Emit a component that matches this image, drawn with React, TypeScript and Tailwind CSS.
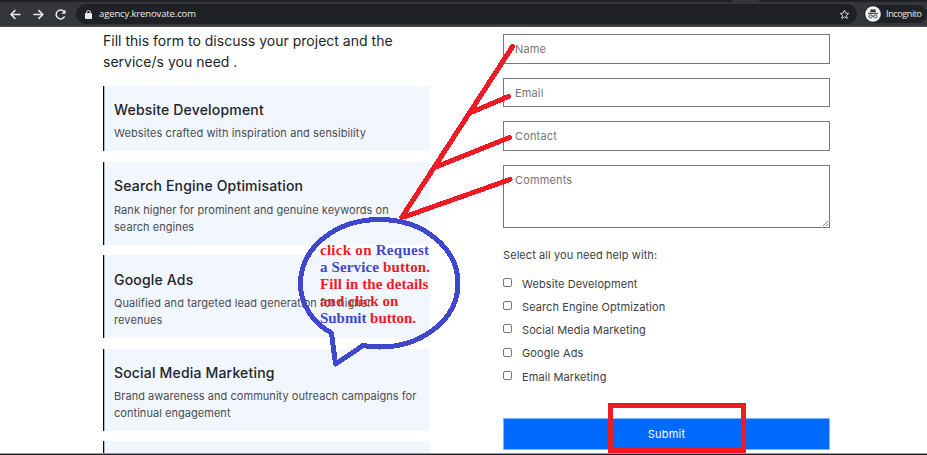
import React from 'react';

const services = [
  { title: 'Website Development', lines: ['Websites crafted with inspiration and sensibility'], box: 'h-[65px] pt-[14px]', text: 'tracking-[0.1px] pt-[6px]' },
  { title: 'Search Engine Optimisation', lines: ['Rank higher for prominent and genuine keywords on', 'search engines'], box: 'h-[83px] pt-[14.5px]', text: 'tracking-[0.06px] pt-[7px]' },
  { title: 'Google Ads', lines: ['Qualified and targeted lead generation for higher', 'revenues'], box: 'h-[83px] pt-[15px]', text: 'tracking-[0.09px] pt-[6px]' },
  { title: 'Social Media Marketing', lines: ['Brand awareness and community outreach campaigns for', 'continual engagement'], box: 'h-[82px] pt-[14px]', text: 'tracking-[0.04px] pt-[6.500px]' },
];

const options = ['Website Development', 'Search Engine Optmization', 'Social Media Marketing', 'Google Ads', 'Email Marketing'];

function Toolbar() {
  return (
    <header className="relative flex h-[27px] shrink-0 items-center border-b border-[#4a4b4e] bg-[#35363a] pt-[2px] font-['Open_Sans',sans-serif] text-[#e8eaed]">
      <div className="absolute left-0 top-0 flex h-[2px] w-full justify-end bg-[#202124]">
        <span className="mr-[168px] h-full w-[27px] bg-[#35363a]" />
      </div>
      <svg className="ml-[10px] h-[11px] w-[11px]" viewBox="0 0 11 11" fill="none" stroke="#e8eaed" strokeWidth="1.5">
        <path d="M10.5 5.5H1.3M5.4 1.1 1 5.5l4.4 4.4" />
      </svg>
      <svg className="ml-[12px] h-[11px] w-[11px]" viewBox="0 0 11 11" fill="none" stroke="#e8eaed" strokeWidth="1.5">
        <path d="M.3 5.5h9.2M5.4 1.1l4.4 4.4-4.4 4.4" />
      </svg>
      <svg className="ml-[11px] h-[11px] w-[11px]" viewBox="0 0 11 11" fill="none" stroke="#e8eaed" strokeWidth="1.5">
        <path d="M9.6 7.3A4.4 4.4 0 1 1 8.9 2.6L10 4" />
        <path d="M10.5.5v4.2H6.3Z" fill="#e8eaed" stroke="none" />
      </svg>
      <div className="ml-[10px] flex h-[20px] w-[781px] items-center rounded-full bg-[#202124] pl-[9px] pr-[7px]">
        <svg className="h-[9px] w-[7px]" viewBox="0 0 7 9">
          <path d="M.5 3.5h6v5h-6Z" fill="#e8eaed" stroke="#e8eaed" />
          <path d="M1.6 4V2.4a1.9 1.9 0 0 1 3.8 0V4" fill="none" stroke="#e8eaed" />
        </svg>
        <span className="ml-[7px] text-[9.5px] font-medium tracking-[-0.13px]">agency.krenovate.com</span>
        <svg className="ml-auto h-[11px] w-[11px]" viewBox="0 0 11 11" fill="none" stroke="#d0d2d5">
          <path d="m5.5 1.2 1.2 2.9 3.1.3-2.4 2 .8 3.1-2.7-1.7-2.7 1.7.8-3.1-2.4-2 3.1-.3Z" />
        </svg>
      </div>
      <div className="ml-[7px] flex h-[18px] flex-1 items-center rounded-full bg-[#202124] pl-[1px]">
        <svg className="h-[16px] w-[16px] shrink-0" viewBox="0 0 16 16">
          <circle cx="8" cy="8" r="7.8" fill="#f1f3f4" />
          <path d="m5 6.2.8-3 2.2.4 2.2-.4.8 3Z" fill="#35363a" />
          <path d="M3 7.3h10" stroke="#35363a" />
          <g fill="none" stroke="#35363a" strokeWidth=".9">
            <circle cx="5.6" cy="10.3" r="1.6" />
            <circle cx="10.4" cy="10.3" r="1.6" />
            <path d="M7.2 10.1q.8-.5 1.6 0" />
          </g>
        </svg>
        <span className="ml-[5px] text-[9px] font-medium tracking-[-0.38px]">Incognito</span>
      </div>
    </header>
  );
}

function Field({ label }: { label: string }) {
  return (
    <div className="flex h-[29.5px] items-center border border-[#767676] pl-[11px] pt-px text-[11px] tracking-[0.15px] text-[#757575]">
      {label}
    </div>
  );
}

function Annotations() {
  return (
    <div className="pointer-events-none absolute inset-0">
      <svg className="absolute inset-0 h-[455px] w-[927px]" viewBox="0 0 927 455" fill="none" strokeLinecap="round" shapeRendering="crispEdges">
        <g stroke="#ed1c24" strokeWidth="5">
          <path d="M402 217 512.500 46.500M472 112l36.500-15.500M436 167l73.500-29.500M404 217l106-37.500" />
        </g>
        <path d="M331.500 333C313 323 300.500 305 300.500 283.500c0-35.500 35-64 79-64s78.500 28.500 78.500 64c0 35-35 63.500-78.500 63.500q-9 0-16.500-1.500L335.500 364Z" stroke="#3f48cc" strokeWidth="5" strokeLinejoin="round" />
      </svg>
      <div className="absolute left-[320px] top-[242px] whitespace-nowrap font-['Liberation_Serif',serif] text-[15px] font-bold leading-[17px] text-[#ed1c24]">
        <div className="tracking-[0.27px]">click on <span className="text-[#3f48cc]">Request</span></div>
        <div className="tracking-[0.13px]"><span className="text-[#3f48cc]">a Service</span> button.</div>
        <div className="tracking-[0.07px]">Fill in the details</div>
        <div className="tracking-[0.07px]">and click on</div>
        <div className="tracking-[-0.05px]"><span className="text-[#3f48cc]">Submit</span> button.</div>
      </div>
      <div className="absolute left-[608px] top-[403px] h-[50px] w-[138px] border-[5px] border-[#ed1c24]" />
    </div>
  );
}

export default function App() {
  return (
    <div className="relative flex h-[455px] w-[927px] flex-col overflow-hidden bg-white font-['Inter',sans-serif]">
      <Toolbar />
      <main className="flex min-h-0 flex-1 gap-[73px] overflow-hidden pl-[103px]">
        <section className="w-[327px] shrink-0 pt-[3px]">
          <p className="h-[56px] whitespace-nowrap text-[14px] leading-[21px] tracking-[0.01px] text-[#212529]">
            Fill this form to discuss your project and the<br />service/s you need .
          </p>
          <div className="flex flex-col gap-[10.5px]">
            {services.map((s) => (
              <article key={s.title} className={`${s.box} shrink-0 whitespace-nowrap border-l border-black bg-[#f2f6ff] pl-[10px] shadow-[inset_1px_0_0_#b5b8c0]`}>
                <h3 className="text-[14px] font-medium leading-[19px] tracking-[0.18px] text-[#212529]">{s.title}</h3>
                <div className={`${s.text} text-[11px] leading-[17px] text-[#4a4d50]`}>
                  {s.lines.map((line) => <p key={line}>{line}</p>)}
                </div>
              </article>
            ))}
            <article className="h-[83px] shrink-0 border-l border-black bg-[#f2f6ff] shadow-[inset_1px_0_0_#b5b8c0]" />
          </div>
        </section>
        <form className="w-[327px] shrink-0 pt-[7px]">
          <div className="flex flex-col gap-[14px]">
            <Field label="Name" />
            <Field label="Email" />
            <Field label="Contact" />
            <div className="relative h-[63px] border border-[#767676] pl-[11px] pt-[6px] text-[11px] leading-[17px] tracking-[0.15px] text-[#757575]">
              Comments
              <svg className="absolute bottom-0 right-0 h-[7px] w-[7px]" viewBox="0 0 7 7" stroke="#555" strokeWidth=".8">
                <path d="m1 6 5-5M4 6l2-2" />
              </svg>
            </div>
          </div>
          <p className="mt-[19px] text-[11px] leading-[17px] tracking-[0.08px] text-[#3c4043]">Select all you need help with:</p>
          <div className="mt-[9px]">
            {options.map((option) => (
              <label key={option} className="flex h-[23.200px] items-center text-[11px] tracking-[0.1px] text-[#3c4043]">
                <span className="mb-[3px] mr-[10px] h-[9px] w-[9px] rounded-[2px] border border-[#767676] bg-white" />
                {option}
              </label>
            ))}
          </div>
          <button type="button" className="mt-[30px] flex h-[32px] w-full items-center justify-center border border-[#80b5ff] bg-[#006aff] text-[11px] tracking-[0.2px] text-white">Submit</button>
        </form>
      </main>
      <footer className="h-[2px] shrink-0 border-t border-[#9a9b9d] bg-[#202124]" />
      <Annotations />
    </div>
  );
}
